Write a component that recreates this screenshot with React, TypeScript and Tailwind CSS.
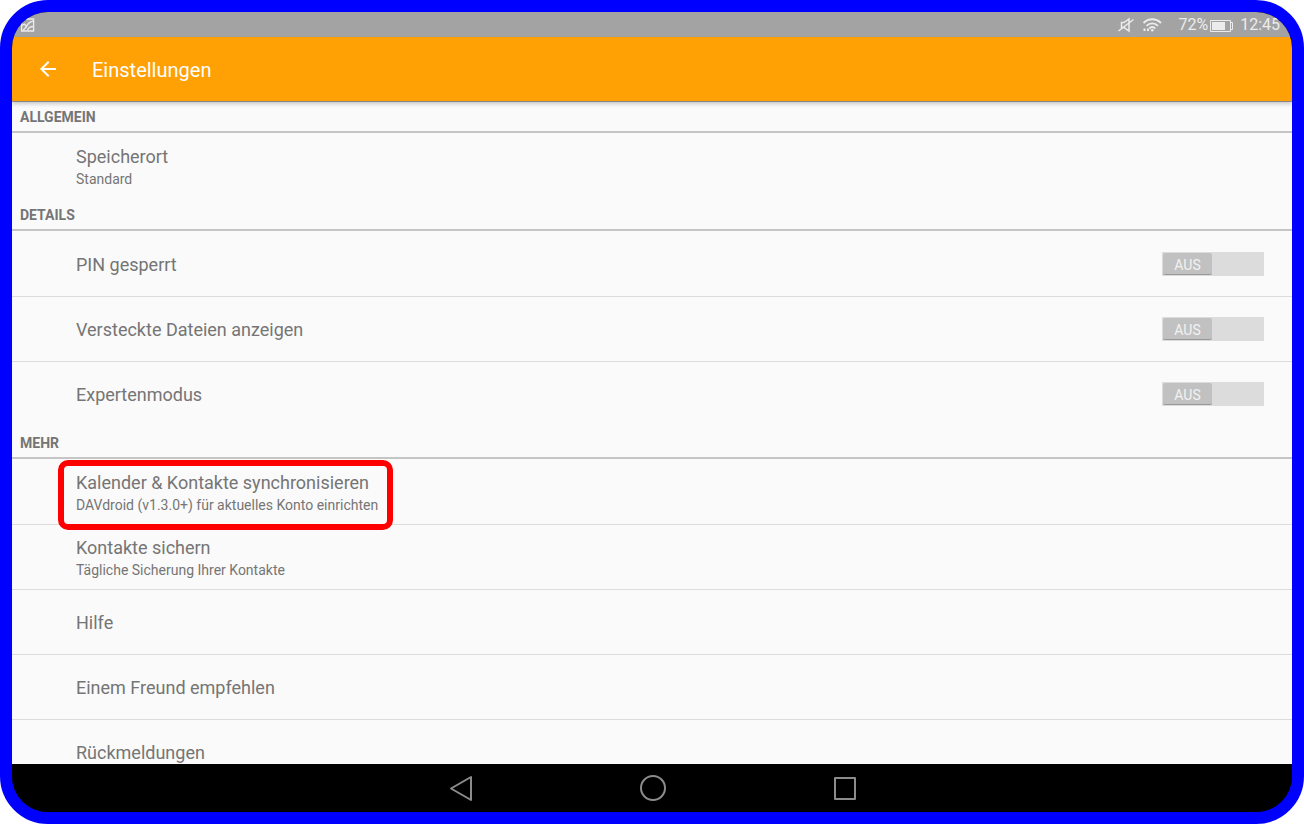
import { useState } from 'react';

type Item = {
  title: string;
  summary?: string;
  toggle?: boolean;
  highlighted?: boolean;
};

type Section = {
  title: string;
  items: Item[];
};

const sections: Section[] = [
  {
    title: 'ALLGEMEIN',
    items: [{ title: 'Speicherort', summary: 'Standard' }],
  },
  {
    title: 'DETAILS',
    items: [
      { title: 'PIN gesperrt', toggle: true },
      { title: 'Versteckte Dateien anzeigen', toggle: true },
      { title: 'Expertenmodus', toggle: true },
    ],
  },
  {
    title: 'MEHR',
    items: [
      {
        title: 'Kalender & Kontakte synchronisieren',
        summary: 'DAVdroid (v1.3.0+) für aktuelles Konto einrichten',
        highlighted: true,
      },
      { title: 'Kontakte sichern', summary: 'Tägliche Sicherung Ihrer Kontakte' },
      { title: 'Hilfe' },
      { title: 'Einem Freund empfehlen' },
      { title: 'Rückmeldungen' },
    ],
  },
];

function StatusBar() {
  return (
    <div className="flex h-[25px] shrink-0 items-center justify-between bg-[#a3a3a3] pr-3 pl-2 text-base text-[#ececec]">
      <svg className="h-4 w-4" viewBox="0 0 16 16" fill="none" stroke="currentColor" strokeWidth="1.3">
        <path d="M1.6 2h12v12h-12z" />
        <path d="M2 8.500 4.500 7l2 2.500C8 6.500 10 4.500 13.500 4M3 13.500l3.500-4M7.500 13.500c.5-2.500 3-4 6-4" />
      </svg>
      <div className="flex items-center">
        <svg className="h-4 w-4" viewBox="0 0 16 16" fill="none" stroke="currentColor" strokeWidth="1.5">
          <path d="M3.500 5.500H6L11 2v12l-5-3.500H3.500z" />
          <path d="M.5 14 15.500 2.500" />
        </svg>
        <svg className="ml-2 h-4 w-5" viewBox="0 0 20 16" fill="none" stroke="currentColor" strokeWidth="1.900">
          <path d="M1.500 6c5-5 12.500-5 17.500 0M4.500 8.800c3.300-3.300 8.200-3.300 11.500 0M7.300 11.500c1.800-1.800 4.100-1.800 5.900 0" />
          <circle cx="10.300" cy="13.300" r="1.300" fill="currentColor" stroke="none" />
          <path d="M1.500 12.800h2M5 12.800h2" strokeWidth="2.500" />
        </svg>
        <span className="ml-4">72%</span>
        <svg className="mt-0.5 ml-0.5 h-3 w-6" viewBox="0 0 24 12" fill="none" stroke="currentColor">
          <path d="M.5.5h20v11H.5z" />
          <path d="M2 2h13v8H2z" fill="currentColor" stroke="none" />
          <path d="M21 2.500h1.500v7H21" />
        </svg>
        <span className="ml-1.5">12:45</span>
      </div>
    </div>
  );
}

function Toggle({ id }: { id: string }) {
  const [checked, setChecked] = useState(false);

  return (
    <label
      htmlFor={id}
      className={`flex h-6 w-[102px] cursor-pointer bg-[#dcdcdc] p-px ${checked ? 'justify-end' : 'justify-start'}`}
    >
      <input
        id={id}
        type="checkbox"
        className="sr-only"
        checked={checked}
        onChange={(e) => setChecked(e.target.checked)}
      />
      <span className="flex w-[49px] items-center justify-center rounded-xs border-b border-[#989898] bg-[#c1c1c1] pt-0.5 text-sm text-[#f2f2f2]">
        {checked ? 'EIN' : 'AUS'}
      </span>
    </label>
  );
}

function Row({ item }: { item: Item }) {
  const text = (
    <>
      <span className="block text-lg leading-6">{item.title}</span>
      {item.summary && <span className="block text-sm leading-5">{item.summary}</span>}
    </>
  );

  return (
    <li className="flex h-[65px] items-center justify-between border-b border-[#dcdcdc] pr-7 pl-16 last:border-transparent">
      {item.toggle ? (
        <>
          <label htmlFor={item.title} className="pt-0.5">
            {text}
          </label>
          <Toggle id={item.title} />
        </>
      ) : (
        <button type="button" className="relative pt-0.5 text-left">
          {text}
          {item.highlighted && (
            <span className="absolute -top-[9px] -right-[15px] -bottom-[15px] -left-[18px] rounded-[10px] border-6 border-[#ff0000]" />
          )}
        </button>
      )}
    </li>
  );
}

export default function App() {
  return (
    <div className="h-screen bg-white font-['Roboto',sans-serif]">
      <div className="flex h-full flex-col overflow-hidden rounded-[48px] border-12 border-[#0000ff] bg-black">
        <StatusBar />

        <header className="z-10 flex h-16 shrink-0 items-center bg-[#ffa004] px-6 text-white shadow-[0_1px_0_rgba(0,0,0,0.35),0_3px_4px_rgba(0,0,0,0.2)]">
          <button type="button" aria-label="Zurück">
            <svg className="h-6 w-6" viewBox="0 0 24 24" fill="currentColor">
              <path d="M20 11H7.830l5.590-5.590L12 4l-8 8 8 8 1.410-1.410L7.830 13H20v-2z" />
            </svg>
          </button>
          <h1 className="ml-8 pt-0.5 text-xl">Einstellungen</h1>
        </header>

        <main className="min-h-0 flex-1 overflow-hidden bg-[#fafafa] text-[#757575]">
          {sections.map((section) => (
            <section key={section.title}>
              <h2 className="h-8 border-b-2 border-[#c5c5c5] px-2 text-sm leading-8 font-bold">
                {section.title}
              </h2>
              <ul className="pt-px">
                {section.items.map((item) => (
                  <Row key={item.title} item={item} />
                ))}
              </ul>
            </section>
          ))}
        </main>

        <nav className="flex h-12 shrink-0 items-center justify-center bg-black text-[#8c8c8c]">
          <button type="button" aria-label="Zurück" className="flex w-48 justify-center">
            <svg className="h-7 w-7" viewBox="0 0 28 28" fill="none" stroke="currentColor" strokeWidth="2" strokeLinejoin="round">
              <path d="M25 3v23L5 14.500z" />
            </svg>
          </button>
          <button type="button" aria-label="Startseite" className="flex w-48 justify-center">
            <svg className="h-7 w-7" viewBox="0 0 28 28" fill="none" stroke="currentColor" strokeWidth="2">
              <circle cx="15" cy="14" r="12" />
            </svg>
          </button>
          <button type="button" aria-label="Übersicht" className="flex w-48 justify-center">
            <svg className="h-7 w-7" viewBox="0 0 28 28" fill="none" stroke="currentColor" strokeWidth="2" strokeLinejoin="round">
              <path d="M5 4h20v21H5z" />
            </svg>
          </button>
        </nav>
      </div>
    </div>
  );
}
